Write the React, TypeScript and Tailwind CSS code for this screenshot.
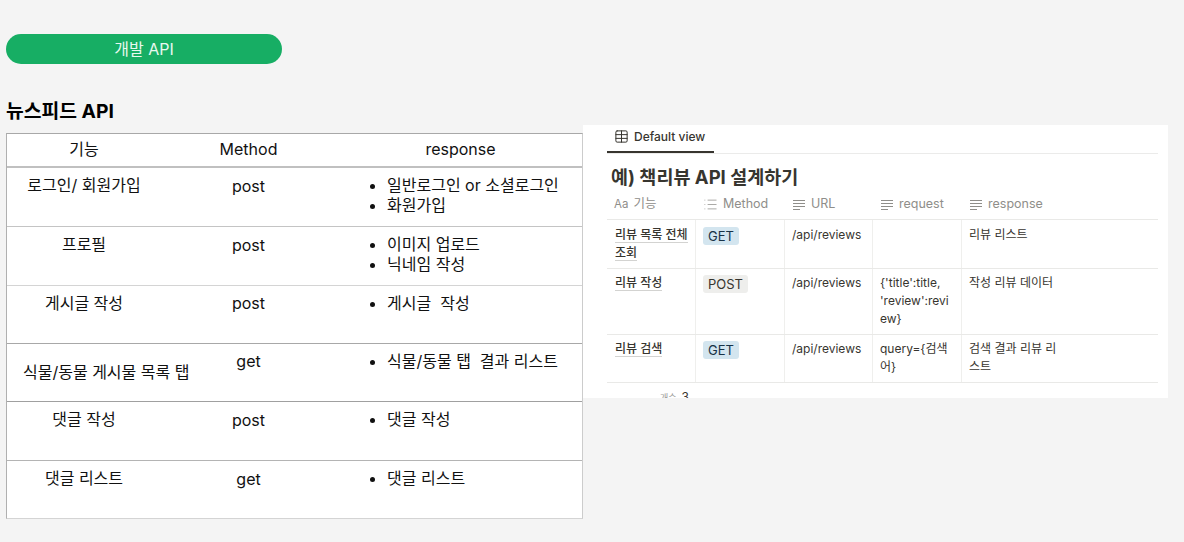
import { List, Table } from 'lucide-react';

const font = "font-['Inter','Noto_Sans_CJK_KR',sans-serif]";

const apiRows = [
  { name: '로그인/ 회원가입', method: 'post', items: ['일반로그인 or 소셜로그인', '화원가입'], h: 'h-[59px]', nameCls: 'pt-[7px]', methodPt: 'pt-[8px]', listPt: 'pt-[7px]', border: 'border-[#c4c4c4]' },
  { name: '프로필', method: 'post', items: ['이미지 업로드', '닉네임 작성'], h: 'h-[59px]', nameCls: 'pt-[7px]', methodPt: 'pt-[8px]', listPt: 'pt-[7px]', border: 'border-[#d4d4d4]' },
  { name: '게시글 작성', method: 'post', items: ['게시글  작성'], h: 'h-[58px]', nameCls: 'pt-[7px]', methodPt: 'pt-[7px]', listPt: 'pt-[7px]', border: 'border-[#a8a8a8]' },
  { name: '식물/동물 게시물 목록 탭', method: 'get', items: ['식물/동물 탭  결과 리스트'], h: 'h-[58px]', nameCls: 'pt-[18px] pl-[16px]', methodPt: 'pt-[7px]', listPt: 'pt-[7px]', border: 'border-[#a0a0a0]' },
  { name: '댓글 작성', method: 'post', items: ['댓글 작성'], h: 'h-[59px]', nameCls: 'pt-[7px]', methodPt: 'pt-[8px]', listPt: 'pt-[7px]', border: 'border-[#b4b4b4]' },
  { name: '댓글 리스트', method: 'get', items: ['댓글 리스트'], h: 'h-[57px]', nameCls: 'pt-[7px]', methodPt: 'pt-[8px]', listPt: 'pt-[7px]', border: '' },
];

const noteRows = [
  { name: ['리뷰 목록 전체', '조회'], tag: 'GET', request: [''], response: ['리뷰 리스트'], h: 'h-[49px]', textPt: 'pt-[6px]', tagPt: 'pt-[7px]' },
  { name: ['리뷰 작성'], tag: 'POST', request: ["{'title':title,", "'review':revi", 'ew}'], response: ['작성 리뷰 데이터'], h: 'h-[66px]', textPt: 'pt-[5px]', tagPt: 'pt-[6px]' },
  { name: ['리뷰 검색'], tag: 'GET', request: ['query={검색', '어}'], response: ['검색 결과 리뷰 리', '스트'], h: 'h-[48px]', textPt: 'pt-[5px]', tagPt: 'pt-[6px]' },
];

function TextIcon() {
  return (
    <svg width="14" height="14" viewBox="0 0 14 14" fill="none" stroke="currentColor" strokeWidth="1">
      <path d="M1 2.5h12M1 5.5h12M1 8.5h12M1 11.5h7" />
    </svg>
  );
}

function NoteHead({ label, kind }: { label: string; kind: 'aa' | 'list' | 'text' }) {
  return (
    <div className="flex items-center gap-[5px] pb-[2px] pl-[7px] text-[12.5px] text-[#8f8e8a]">
      {kind === 'aa' && <span className="text-[11.5px]">Aa</span>}
      {kind === 'list' && <List size={15} strokeWidth={1.2} />}
      {kind === 'text' && <TextIcon />}
      <span>{label}</span>
    </div>
  );
}

export default function App() {
  return (
    <div className={`flex h-[542px] w-[1184px] overflow-hidden bg-[#f4f4f4] ${font}`}>
      <div className="w-[583px] shrink-0 pl-[6px] pt-[34px]">
        <div className="flex h-[30px] w-[276px] items-center justify-center rounded-full bg-[#17ae64] text-[16px] text-[#e8f8ef]">
          개발 API
        </div>
        <h2 className="mt-[34px] h-[26px] text-[19.3px] font-bold leading-[26px] text-black">뉴스피드 API</h2>
        <div className="mt-[9px] border border-[#b0b0b0] border-t-[#a8a8a8] border-r-[#cccccc] border-b-[#d4d4d4] bg-white text-[16px] text-[#111]">
          <div className="grid h-[34px] grid-cols-[154px_175px_1fr] border-b-2 border-[#c0c0c0] pt-[3px] text-center leading-[24px]">
            <span>기능</span>
            <span>Method</span>
            <span className="pl-[3px]">response</span>
          </div>
          {apiRows.map((row, i) => (
            <div
              key={row.name}
              className={`grid grid-cols-[154px_175px_1fr] ${row.h} ${i < apiRows.length - 1 ? `border-b ${row.border}` : ''} leading-[20px]`}
            >
              <span className={`whitespace-nowrap text-center ${row.nameCls}`}>{row.name}</span>
              <span className={`text-center ${row.methodPt}`}>{row.method}</span>
              <ul className={`list-disc whitespace-pre pl-[51px] ${row.listPt}`}>
                {row.items.map((item) => (
                  <li key={item}>{item}</li>
                ))}
              </ul>
            </div>
          ))}
        </div>
      </div>

      <div className="mt-[125px] h-[273px] w-[585px] shrink-0 overflow-hidden bg-white pl-[24px] pr-[10px] text-[#37352f]">
        <div className="h-[29px] border-b border-[#ebebea]">
          <div className="flex h-[28px] w-[107px] items-center gap-[5px] border-b-2 border-[#37352f] pb-[3px] pl-[7px] text-[12px] font-medium">
            <Table size={15} strokeWidth={1.6} />
            <span>Default view</span>
          </div>
        </div>
        <h3 className="mt-[8px] h-[30px] pl-[4px] text-[18.5px] font-bold leading-[30px]">예) 책리뷰 API 설계하기</h3>
        <div className="grid h-[28px] grid-cols-[89px_89px_88px_89px_1fr] items-center border-b border-[#e9e9e7]">
          <NoteHead label="기능" kind="aa" />
          <NoteHead label="Method" kind="list" />
          <NoteHead label="URL" kind="text" />
          <NoteHead label="request" kind="text" />
          <NoteHead label="response" kind="text" />
        </div>
        {noteRows.map((row) => (
          <div
            key={row.name[0]}
            className={`grid ${row.h} grid-cols-[89px_89px_88px_89px_1fr] border-b border-[#e9e9e7] text-[12px] leading-[18px]`}
          >
            <div className={`border-r border-[#efefed] pl-[8px] font-medium ${row.textPt}`}>
              {row.name.map((line) => (
                <div key={line}>
                  <span className="border-b border-[#d3d3d1]">{line}</span>
                </div>
              ))}
            </div>
            <div className={`border-r border-[#efefed] pl-[7px] ${row.tagPt}`}>
              <span
                className={`inline-block h-[18px] rounded-[3px] px-[5px] text-[13px] leading-[18px] ${
                  row.tag === 'GET' ? 'bg-[#d3e5ef] text-[#183347]' : 'bg-[#eeeeec] text-[#37352f]'
                }`}
              >
                {row.tag}
              </span>
            </div>
            <div className={`border-r border-[#efefed] pl-[7px] ${row.textPt}`}>/api/reviews</div>
            <div className={`border-r border-[#efefed] pl-[7px] ${row.textPt}`}>
              {row.request.map((line) => (
                <div key={line}>{line}</div>
              ))}
            </div>
            <div className={`pl-[7px] ${row.textPt}`}>
              {row.response.map((line) => (
                <div key={line}>{line}</div>
              ))}
            </div>
          </div>
        ))}
        <div className="flex items-baseline gap-[5px] pl-[53px] pt-[5px] leading-[18px]">
          <span className="text-[9px] text-[#9b9a97]">개수</span>
          <span className="text-[12px]">3</span>
        </div>
      </div>
    </div>
  );
}
